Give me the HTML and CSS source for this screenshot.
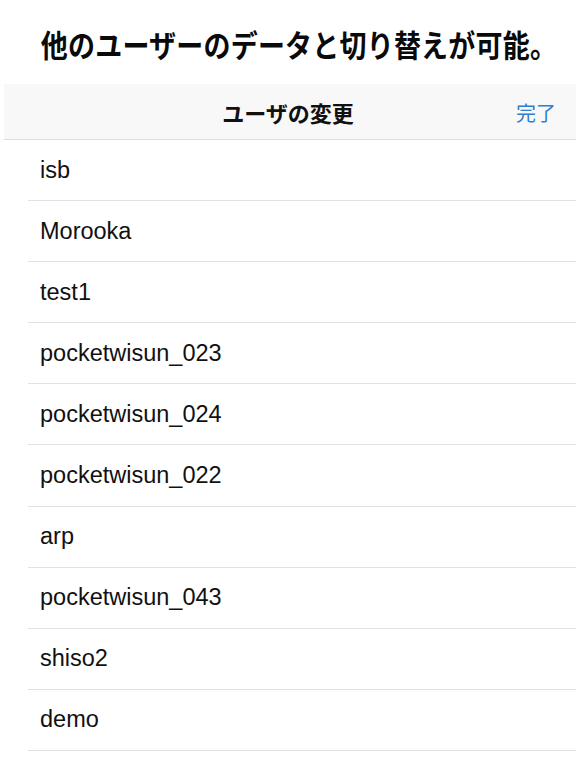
FILE: index.html
```html
<!DOCTYPE html>
<html lang="ja">
<head>
<meta charset="utf-8">
<link rel="stylesheet" href="styles.css">
</head>
<body>
<header class="caption"><h1 class="caption-text">他のユーザーのデータと切り替えが可能。</h1></header>
<div class="navbar">
  <span class="nav-title">ユーザの変更</span>
  <span class="nav-done">完了</span>
</div>
<ul class="list">
  <li class="row">isb</li>
  <li class="row">Morooka</li>
  <li class="row">test1</li>
  <li class="row">pocketwisun_023</li>
  <li class="row">pocketwisun_024</li>
  <li class="row">pocketwisun_022</li>
  <li class="row">arp</li>
  <li class="row">pocketwisun_043</li>
  <li class="row">shiso2</li>
  <li class="row">demo</li>
</ul>
</body>
</html>
```
FILE: styles.css
```css
html, body {
  margin: 0;
  padding: 0;
  background: #ffffff;
  width: 576px;
  height: 768px;
  overflow: hidden;
}
.caption {
  height: 84px;
  display: flex;
  align-items: center;
  justify-content: center;
  padding-left: 22px;
  box-sizing: border-box;
}
.caption-text {
  margin: 0;
  padding-top: 2px;
  font-family: "Noto Sans CJK JP", sans-serif;
  font-weight: 700;
  font-size: 27px;
  letter-spacing: 0.2px;
  color: #0a0a0a;
  transform: scaleY(1.12);
  white-space: nowrap;
}
.navbar {
  margin-left: 4px;
  height: 55px;
  background: #f8f8f8;
  border-bottom: 1px solid #dcdcdc;
  position: relative;
  display: flex;
  align-items: center;
  justify-content: center;
  font-family: "Noto Sans CJK JP", sans-serif;
}
.nav-title {
  font-size: 22px;
  font-weight: 700;
  color: #111;
  margin-left: -4px;
}
.nav-done {
  position: absolute;
  right: 20px;
  top: 50%;
  transform: translateY(-50%);
  font-size: 20px;
  font-weight: 400;
  color: #2f7fd0;
}
.list {
  list-style: none;
  margin: 0;
  padding: 0 0 0 28px;
}
.row {
  height: 60.1px;
  border-bottom: 1px solid #e2e2e2;
  display: flex;
  align-items: center;
  padding-left: 12px;
  font-family: "Liberation Sans", Arial, sans-serif;
  font-size: 23.5px;
  color: #111;
}
```
